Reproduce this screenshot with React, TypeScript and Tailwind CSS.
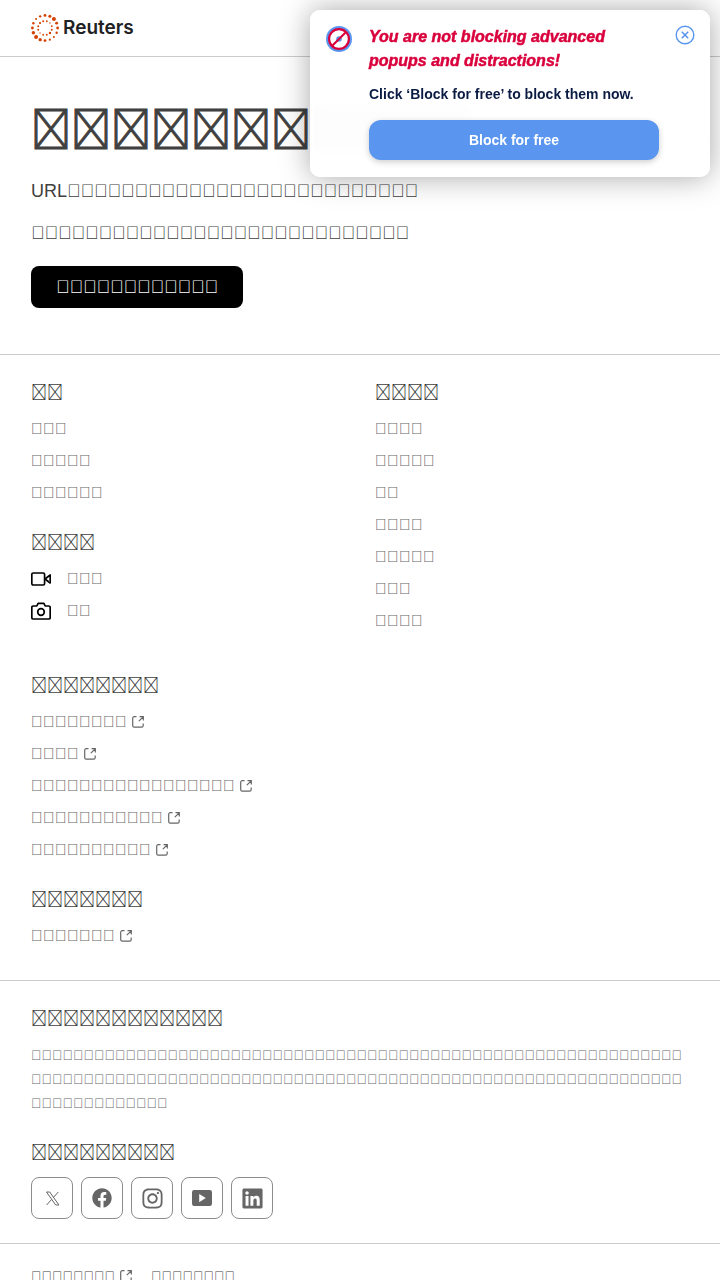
import type { ReactNode } from "react";
import { FaFacebook, FaInstagram, FaLinkedin } from "react-icons/fa";
import { Menu, Search } from "lucide-react";

const glyph = "\u{2FFFD}";
const text = (count: number) => glyph.repeat(count);

const App: React.FC = () => {
  return (
    <div className="min-h-screen bg-white font-['Liberation_Sans',Arial,sans-serif] text-[#404040]">
      <Header />
      <main>
        <Hero />
        <Sections />
      </main>
      <Footer />
      <Popup />
    </div>
  );
};

// radii of the logo dots, clockwise from the top
const outerDots = [1.4, 1.5, 2, 1.4, 1.4, 1.2, 1, 1.1, 1.4, 1.7, 2, 1.7, 1.4, 1.2, 1, 1.2];
const innerDots = [0.9, 0.7, 0.9, 1, 1.2, 0.9, 0.9, 0.7, 1, 1, 1.1, 1];

function dots(radii: number[], distance: number, offset: number) {
  return radii.map((r, i) => {
    const angle = (i / radii.length) * Math.PI * 2 + offset;
    return (
      <circle
        key={`${distance}-${i}`}
        cx={14 + Math.sin(angle) * distance}
        cy={14 - Math.cos(angle) * distance}
        r={r}
      />
    );
  });
}

function Header() {
  return (
    <header className="flex h-[57px] items-center justify-between border-b border-[#cccccc] px-[31px]">
      <a href="#" className="flex items-center gap-1">
        <svg viewBox="0 0 28 28" className="size-7 fill-[#d64000]" aria-hidden="true">
          {dots(outerDots, 12.6, 0)}
          {dots(innerDots, 7, 0.26)}
        </svg>
        <span className="font-['Inter',sans-serif] text-[19px] leading-6 font-semibold text-[#212223]">
          Reuters
        </span>
      </a>
      <div className="flex gap-8 text-[#404040]">
        <button type="button" aria-label="Search">
          <Search className="size-5" />
        </button>
        <button type="button" aria-label="Menu">
          <Menu className="size-5" />
        </button>
      </div>
    </header>
  );
}

function Hero() {
  return (
    <section className="border-b border-[#cccccc] px-[31px] pt-10 pb-[46px]">
      <h1 className="font-['Noto_Sans_CJK_JP',sans-serif] text-[40px] leading-[60px] font-bold [-webkit-text-stroke:1px_#404040]">
        {text(11)}
      </h1>
      <p className="mt-[21px] text-lg leading-[26px]">URL{text(26)}</p>
      <p className="mt-4 text-lg leading-[26px]">{text(28)}</p>
      <a
        href="#"
        className="mt-5 inline-block rounded-lg bg-black px-[25px] text-lg leading-[42px] text-white"
      >
        {text(12)}
      </a>
    </section>
  );
}

function Heading({ count }: { count: number }) {
  return (
    <h2 className="font-['Noto_Sans_CJK_JP',sans-serif] text-base leading-6 font-medium">
      {text(count)}
    </h2>
  );
}

function LinkGroup({ title, links, external }: { title: number; links: number[]; external?: boolean }) {
  return (
    <div>
      <Heading count={title} />
      <ul className="mt-2.5">
        {links.map((count, i) => (
          <li key={i} className="flex">
            <a href="#" className="flex items-center gap-[5px] text-base leading-8 text-[#666666]">
              {text(count)}
              {external && <ExternalIcon />}
            </a>
          </li>
        ))}
      </ul>
    </div>
  );
}

function Sections() {
  return (
    <nav
      aria-label="Sections"
      className="border-b border-[#cccccc] px-[31px] pt-6 pb-7"
    >
      <div className="grid grid-cols-2 gap-x-[30px]">
        <div className="flex flex-col gap-5">
          <LinkGroup title={2} links={[3, 5, 6]} />
          <div>
            <Heading count={4} />
            <ul className="mt-2.5 text-base leading-8 text-[#666666]">
              <li className="flex">
                <a href="#" className="flex items-center gap-4">
                  <VideoIcon />
                  {text(3)}
                </a>
              </li>
              <li className="flex">
                <a href="#" className="flex items-center gap-4">
                  <CameraIcon />
                  {text(2)}
                </a>
              </li>
            </ul>
          </div>
        </div>
        <LinkGroup title={4} links={[4, 5, 2, 4, 5, 3, 4]} />
      </div>
      <div className="mt-[35px] flex flex-col gap-5">
        <LinkGroup title={8} links={[8, 4, 17, 11, 10]} external />
        <LinkGroup title={7} links={[7]} external />
      </div>
    </nav>
  );
}

function Social({ label, children }: { label: string; children: ReactNode }) {
  return (
    <a
      href="#"
      aria-label={label}
      className="flex size-[42px] items-center justify-center rounded-lg border border-[#8c8c8c] text-[#666666]"
    >
      {children}
    </a>
  );
}

function Footer() {
  return (
    <footer>
      <div className="border-b border-[#cccccc] px-[31px] pt-6 pb-6">
        <Heading count={12} />
        <p className="mt-3.5 text-sm leading-6 break-all text-[#666666]">{text(137)}</p>
        <div className="mt-6">
          <Heading count={9} />
        </div>
        <div className="mt-3.5 flex gap-2">
          <Social label="X">
            <svg viewBox="0 0 20 20" className="size-5" fill="none" stroke="currentColor" strokeWidth="1" aria-hidden="true">
              <path d="M4.5 4h3.2l9.2 13h-3.2zM16.3 4l-5.2 5.8M9.6 11.5L4.6 17" />
            </svg>
          </Social>
          <Social label="Facebook">
            <FaFacebook className="size-5" />
          </Social>
          <Social label="Instagram">
            <FaInstagram className="size-[23px]" />
          </Social>
          <Social label="YouTube">
            <svg viewBox="0 0 20 20" className="size-5" aria-hidden="true">
              <path
                fill="currentColor"
                fillRule="evenodd"
                d="M2.2 2h15.6A2.2 2.2 0 0 1 20 4.2v11.6a2.2 2.2 0 0 1-2.2 2.2H2.2A2.2 2.2 0 0 1 0 15.8V4.2A2.2 2.2 0 0 1 2.2 2zM7.2 6v8.2l6.6-4.1z"
              />
            </svg>
          </Social>
          <Social label="LinkedIn">
            <FaLinkedin className="size-[23px]" />
          </Social>
        </div>
      </div>
      <div className="flex gap-[19px] px-[31px] pt-5 pb-6 text-sm leading-6 text-[#404040]">
        <a href="#" className="inline-flex items-center gap-[5px]">
          {text(8)}
          <ExternalIcon />
        </a>
        <a href="#">{text(8)}</a>
      </div>
    </footer>
  );
}

function Popup() {
  return (
    <aside className="fixed top-2.5 right-2.5 flex w-[400px] max-w-full rounded-[10px] bg-white/97 px-4 pt-[15px] pb-[17px] shadow-[0_0_30px_rgba(0,0,0,0.35)] backdrop-blur-sm">
      <svg viewBox="0 0 26 26" className="mt-px size-[26px] shrink-0" fill="none" aria-hidden="true">
        <circle cx="13" cy="13" r="13" fill="#5a95ef" />
        <circle cx="13" cy="13" r="9.5" fill="#ffffff" />
        <circle cx="13" cy="13" r="2.8" fill="#5a95ef" />
        <circle cx="13" cy="13" r="9.9" stroke="#d9003c" strokeWidth="2.2" />
        <path d="M6 20L20 6" stroke="#d9003c" strokeWidth="2.2" />
      </svg>
      <div className="ml-[17px] w-[290px]">
        <p className="pr-8 text-base leading-6 font-bold text-[#d9003c] italic [-webkit-text-stroke:0.5px_#d9003c]">
          You are not blocking advanced popups and distractions!
        </p>
        <p className="mt-[11px] text-sm leading-5 font-bold text-[#0b1c44]">
          Click ‘Block for free’ to block them now.
        </p>
        <button
          type="button"
          className="mt-4 h-10 w-full rounded-xl bg-[#5a95ef] text-sm font-bold text-white shadow-[0_2px_6px_rgba(0,0,0,0.2)]"
        >
          Block for free
        </button>
      </div>
      <button type="button" aria-label="Close" className="-mr-px ml-auto size-5 self-start">
        <svg viewBox="0 0 20 20" className="size-5" fill="none" stroke="#5a95ef" strokeWidth="1.4" aria-hidden="true">
          <circle cx="10" cy="10" r="8.8" />
          <path d="M6.8 6.8l6.4 6.4M13.2 6.8l-6.4 6.4" strokeWidth="1.6" />
        </svg>
      </button>
    </aside>
  );
}

function ExternalIcon() {
  return (
    <svg viewBox="0 0 12 12" className="size-3" fill="none" stroke="#666666" strokeWidth="1.2" aria-hidden="true">
      <path d="M4.5.6H2.3A1.6 1.6 0 0 0 .7 2.2v7.4a1.6 1.6 0 0 0 1.6 1.6h7.3a1.6 1.6 0 0 0 1.6-1.6V7.5" />
      <path d="M6.8 5.2l3.9-3.9M7.5.6h3.8v3.8" />
    </svg>
  );
}

function VideoIcon() {
  return (
    <svg viewBox="0 0 20 20" className="size-5" fill="none" stroke="#000000" strokeWidth="1.7" strokeLinejoin="round" aria-hidden="true">
      <rect x=".8" y="4" width="12.8" height="12" rx="1.5" />
      <path d="M14 10l5.2-4v8z" />
    </svg>
  );
}

function CameraIcon() {
  return (
    <svg viewBox="0 0 20 20" className="size-5" fill="none" stroke="#000000" strokeWidth="1.7" strokeLinejoin="round" aria-hidden="true">
      <path d="M2.3 5h3.5l1.3-2.7h5.8L14.2 5h3.5a1.5 1.5 0 0 1 1.5 1.5v10a1.5 1.5 0 0 1-1.5 1.5H2.3a1.5 1.5 0 0 1-1.5-1.5v-10A1.5 1.5 0 0 1 2.3 5z" />
      <circle cx="10" cy="11" r="3.3" />
    </svg>
  );
}

export default App;
